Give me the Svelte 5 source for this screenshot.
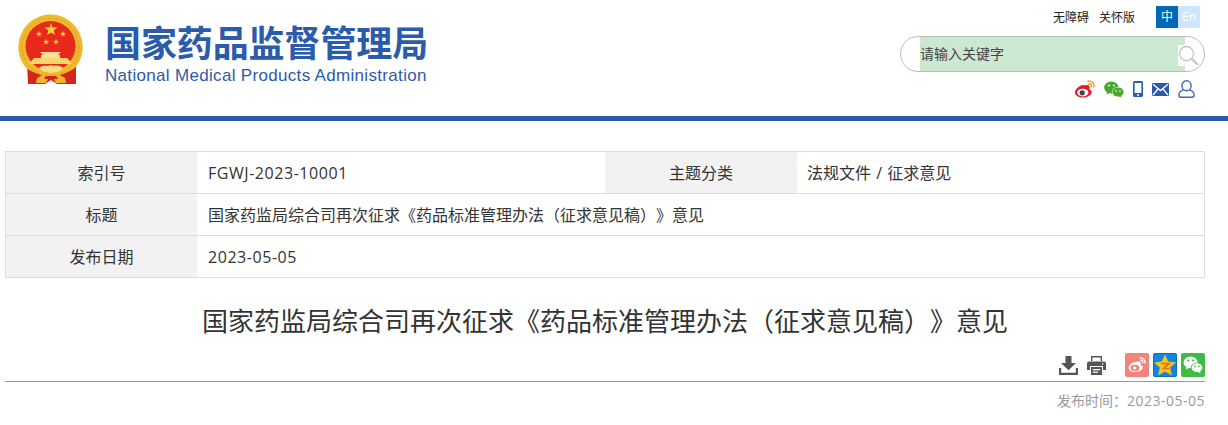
<script>
  const rows = [
    [['索引号', 'FGWJ-2023-10001', true], ['主题分类', '法规文件 / 征求意见', false]],
    [['标题', '国家药监局综合司再次征求《药品标准管理办法（征求意见稿）》意见', false]],
    [['发布日期', '2023-05-05', true]]
  ];
  const title = '国家药监局综合司再次征求《药品标准管理办法（征求意见稿）》意见';
</script>

<div class="page">
  <header class="header">
    <div class="brand">
      <svg class="emblem" width="68" height="72" viewBox="0 0 68 72">
        <path d="M10 49 H59 V70 H40 L34 66 L28 70 H11 Z" fill="#d6261c"/>
        <path d="M33.5 .5 A32.5 32.5 0 0 1 58 54 C52 58 46 60 40 62 H27 C21 60 15 58 9 54 A32.5 32.5 0 0 1 33.5 .5 Z" fill="#f0b92d"/>
        <circle cx="33.5" cy="33" r="28.5" fill="none" stroke="#d9981c" stroke-width="1" stroke-dasharray="2 2"/>
        <circle cx="33.5" cy="32" r="25" fill="#e8291c"/>
        <polygon points="34,9 35.6,13.5 40.4,13.6 36.6,16.5 38,21.1 34,18.4 30,21.1 31.4,16.5 27.6,13.6 32.4,13.5" fill="#f8d23c"/>
        <polygon points="22,17 22.8,19 25,19 23.2,20.4 23.9,22.6 22,21.3 20.1,22.6 20.8,20.4 19,19 21.2,19" fill="#f8d23c"/>
        <polygon points="46,17 46.8,19 49,19 47.2,20.4 47.9,22.6 46,21.3 44.1,22.6 44.8,20.4 43,19 45.2,19" fill="#f8d23c"/>
        <polygon points="29,25 29.8,27 32,27 30.2,28.4 30.9,30.6 29,29.3 27.1,30.6 27.8,28.4 26,27 28.2,27" fill="#f8d23c"/>
        <polygon points="39,25 39.8,27 42,27 40.2,28.4 40.9,30.6 39,29.3 37.1,30.6 37.8,28.4 36,27 38.2,27" fill="#f8d23c"/>
        <path d="M24 44 V41 H26 L23 38 H44 L41 41 H43 V44 Z" fill="#fbdf92"/>
        <path d="M12 50 L17 44 H50 L56 50 Z" fill="#f8d66c"/>
        <path d="M22 54 C26 50 30 53 34 51 C38 53 42 50 46 54 C44 58 39 58 34 59 C29 58 24 58 22 54 Z" fill="#f9dd7a"/>
        <path d="M31 58 L20 64 L19 69 H29 L31 65 L27 65 Z M37 58 L48 64 L49 69 H39 L37 65 L41 65 Z" fill="#efb72c"/>
      </svg>
      <div class="names">
        <div class="cn">国家药品监督管理局</div>
        <div class="en">National Medical Products Administration</div>
      </div>
    </div>
    <div class="tools">
      <div class="toplinks">
        <span>无障碍</span>
        <span>关怀版</span>
        <div class="lang"><b class="zh">中</b><b class="el">En</b></div>
      </div>
      <div class="search">
        <div class="field">请输入关键字</div>
        <svg class="glass" width="21" height="21" viewBox="0 0 21 21" fill="none" stroke="#c4c4c4">
          <circle cx="8.5" cy="8.5" r="7" stroke-width="1.3"/>
          <path d="M13.5 13.5 L20 20" stroke-width="1.8"/>
        </svg>
      </div>
      <div class="social">
        <svg width="20" height="18" viewBox="0 0 20 18">
          <path d="M7.8 5 C3.8 5.8 0 9.6 0 12.6 C0 16 4.5 17.8 8.2 17.6 C12.8 17.3 16.8 15 16.8 12 C16.8 10.2 14.8 9.7 14.4 9.2 C15.2 7 14.2 5 11.8 5 C10.6 5 9 5.7 7.8 5 Z" fill="#e6162d"/>
          <ellipse cx="7.8" cy="12.6" rx="5.6" ry="3.9" fill="#fff"/>
          <circle cx="7.2" cy="12.8" r="2.6" fill="#444"/>
          <path d="M13 1.2 C16.5 .5 19.4 3.3 18.8 6.8 M13.6 4 C15.3 3.6 16.7 5 16.2 6.7" fill="none" stroke="#f5a623" stroke-width="1.6" stroke-linecap="round"/>
        </svg>
        <svg width="20" height="17" viewBox="0 0 20 17">
          <ellipse cx="7.3" cy="6.4" rx="7.2" ry="6" fill="#4ba82e"/>
          <path d="M3 10 L2.6 13.5 L6.5 11.5 Z" fill="#4ba82e"/>
          <ellipse cx="14" cy="11" rx="6" ry="5" fill="#fff"/>
          <ellipse cx="14" cy="11" rx="5.6" ry="4.6" fill="#4ba82e"/>
          <path d="M16.5 14 L17.8 16.6 L14 15 Z" fill="#4ba82e"/>
          <circle cx="5" cy="4.5" r="1" fill="#fff"/><circle cx="9.8" cy="4.5" r="1" fill="#fff"/>
          <circle cx="12" cy="10" r=".8" fill="#fff"/><circle cx="16" cy="10" r=".8" fill="#fff"/>
        </svg>
        <svg width="10" height="16" viewBox="0 0 10 16">
          <rect x="0" y="0" width="10" height="16" rx="1.5" fill="#2c5bab"/>
          <rect x="1.6" y="2" width="6.8" height="10" fill="#fff"/>
          <circle cx="5" cy="14" r="1" fill="#fff"/>
        </svg>
        <svg width="17" height="13" viewBox="0 0 17 13">
          <rect width="17" height="13" rx="1" fill="#2c5bab"/>
          <path d="M1 1.2 L8.5 7.6 L16 1.2 M1 12 L6 6 M16 12 L11 6" fill="none" stroke="#fff" stroke-width="1.3"/>
        </svg>
        <svg width="17" height="18" viewBox="0 0 17 18" fill="none" stroke="#3f66b0" stroke-width="1.4">
          <ellipse cx="8.5" cy="5.8" rx="4.6" ry="5"/>
          <path d="M5.5 9.8 C2.5 10.8 .9 12.8 .9 15 C.9 16.6 2 17.2 3.2 17.2 H13.8 C15 17.2 16.1 16.6 16.1 15 C16.1 12.8 14.5 10.8 11.5 9.8"/>
        </svg>
      </div>
    </div>
  </header>

  <main class="main">
    <div class="info">
      {#each rows as row}
        <div class="row">
          {#each row as [label, value, latin]}
            <div class="label">{label}</div>
            <div class="value" class:latin>{value}</div>
          {/each}
        </div>
      {/each}
    </div>

    <h1>{title}</h1>

    <div class="actions">
      <div class="tools-icons">
        <svg width="19" height="19" viewBox="0 0 19 19" fill="#555">
          <path d="M6.5 0 H12.5 V7 H17 L9.5 14.2 L2 7 H6.5 Z"/>
          <path d="M0 12 H2.2 V16.7 H16.8 V12 H19 V19 H0 Z"/>
        </svg>
        <svg width="19" height="19" viewBox="0 0 19 19">
          <path d="M4 0 H15 V5 H13.6 V1.5 H5.4 V5 H4 Z" fill="#555"/>
          <path d="M2 5.5 H17 Q19 5.5 19 7.5 V14 H16 V10 H3 V14 H0 V7.5 Q0 5.5 2 5.5 Z" fill="#555"/>
          <path d="M4 11 H15 V19 H4 Z M5.8 13 V14.2 H13.2 V13 Z M5.8 15.6 V16.8 H11 V15.6 Z" fill="#555" fill-rule="evenodd"/>
          <circle cx="15.8" cy="8" r=".8" fill="#fff"/>
        </svg>
      </div>
      <div class="share">
        <svg width="24" height="24" viewBox="0 0 24 24">
          <rect width="24" height="24" rx="2" fill="#f3847a"/>
          <path d="M10 9 C6.5 9.6 3.5 12.5 3.6 15 C3.8 18 7.5 19.2 10.6 19 C14.4 18.7 17.8 16.7 17.8 14.3 C17.8 12.6 16 12.3 15.6 11.9 C16.3 10.2 15.6 8.6 13.6 8.6 C12.6 8.6 11.2 8.8 10 9 Z" fill="#fff"/>
          <ellipse cx="10" cy="15" rx="4.4" ry="3.2" fill="#f3847a"/>
          <circle cx="9.7" cy="15.1" r="1.7" fill="#fff"/>
          <path d="M15 5 C18 4.5 20.5 7 20 10 M15.5 7.2 C17 6.9 18.2 8.1 17.8 9.6" fill="none" stroke="#fff" stroke-width="1.3" stroke-linecap="round"/>
        </svg>
        <svg width="24" height="24" viewBox="0 0 24 24">
          <rect width="24" height="24" rx="2" fill="#1287e0"/>
          <rect x=".5" y=".5" width="23" height="23" rx="2" fill="none" stroke="#0a6fc0"/>
          <polygon points="12,1.5 15.2,8.6 23,9.4 17.2,14.6 18.9,22.4 12,18.4 5.1,22.4 6.8,14.6 1,9.4 8.8,8.6" fill="#fcc419"/>
          <path d="M8 10.5 H16 L10.5 15.5 H16.5" fill="none" stroke="#e8711c" stroke-width="1.7"/>
        </svg>
        <svg width="24" height="24" viewBox="0 0 24 24">
          <rect width="24" height="24" rx="2" fill="#3fbc43"/>
          <ellipse cx="9.6" cy="9.4" rx="7" ry="5.8" fill="#fff"/>
          <path d="M5.5 13 L5 16.4 L8.6 14.5 Z" fill="#fff"/>
          <ellipse cx="16" cy="14.6" rx="6.3" ry="5.2" fill="#3fbc43"/>
          <ellipse cx="16" cy="14.6" rx="5.4" ry="4.4" fill="#fff"/>
          <path d="M18.4 17.8 L19.8 20.6 L15.8 18.6 Z" fill="#fff"/>
          <circle cx="7.2" cy="7.6" r="1" fill="#3fbc43"/><circle cx="12" cy="7.6" r="1" fill="#3fbc43"/>
          <circle cx="14" cy="13.4" r=".8" fill="#3fbc43"/><circle cx="18" cy="13.4" r=".8" fill="#3fbc43"/>
        </svg>
      </div>
    </div>

    <div class="date">发布时间：<span class="stamp">2023-05-05</span></div>
  </main>
</div>

<style>
  :global(body) {
    margin: 0;
    background: #fff;
    overflow: hidden;
  }
  .page {
    width: 1228px;
    font-family: "Open Sans", "Noto Sans CJK SC", sans-serif;
    color: #333;
    text-spacing-trim: space-all;
  }
  .header {
    height: 116px;
    border-bottom: 5px solid #2b5bab;
    display: flex;
    justify-content: space-between;
    padding: 0 28px 0 17px;
  }
  .brand {
    display: flex;
    align-items: flex-start;
  }
  .emblem {
    margin-top: 14px;
  }
  .names {
    margin: 19px 0 0 20px;
  }
  .cn {
    font: 700 36px/44px "Noto Sans CJK SC", sans-serif;
    color: #2b5bab;
    letter-spacing: -0.1px;
    white-space: nowrap;
  }
  .en {
    font: 17px/22px "Liberation Sans", sans-serif;
    color: #2b5bab;
    margin-top: 2px;
    letter-spacing: 0.32px;
    white-space: nowrap;
  }
  .tools {
    width: 305px;
    padding-top: 6px;
    margin-right: -5px;
  }
  .toplinks {
    display: flex;
    justify-content: flex-end;
    align-items: center;
    gap: 10px;
    height: 22px;
    padding-right: 5px;
    font-size: 12px;
    color: #222;
    white-space: nowrap;
  }
  .lang {
    display: flex;
    margin-left: 11px;
    line-height: 22px;
    text-align: center;
    font-size: 12px;
  }
  .lang b {
    width: 22px;
    font-weight: 400;
    color: #fff;
  }
  .zh {
    background: #0068b7;
  }
  .el {
    background: #cce6ff;
  }
  .search {
    position: relative;
    box-sizing: border-box;
    height: 36px;
    margin-top: 8px;
    border: 1px solid #bbb;
    border-radius: 18px;
    padding-left: 19px;
  }
  .field {
    width: 265px;
    height: 34px;
    background: #cde8d0;
    font-size: 14px;
    line-height: 34px;
    color: #444;
  }
  .glass {
    position: absolute;
    left: 277px;
    top: 8px;
    background: linear-gradient(to right, #fff 7px, transparent 7px);
  }
  .social {
    display: flex;
    align-items: center;
    justify-content: flex-end;
    gap: 9px;
    height: 18px;
    margin-top: 8px;
    padding-right: 10px;
  }
  .main {
    padding: 30px 23px 0 5px;
  }
  .info {
    border: 1px solid #ddd;
    width: 1200px;
    box-sizing: border-box;
  }
  .row {
    display: flex;
    height: 41px;
    font-size: 16px;
    line-height: 43px;
    color: #333;
    word-spacing: 1px;
  }
  .row + .row {
    border-top: 1px solid #ddd;
  }
  .label {
    flex: none;
    width: 191px;
    background: #f2f2f2;
    text-align: center;
  }
  .label:nth-child(3) {
    width: 192px;
  }
  .value {
    flex: 1 1 0;
    padding-left: 11px;
    white-space: nowrap;
  }
  .value:nth-child(4) {
    flex: 0 0 397px;
    padding-left: 10px;
  }
  .latin {
    letter-spacing: 0.55px;
  }
  h1 {
    margin: 24px 0 0;
    width: 1200px;
    text-align: center;
    font-size: 26px;
    font-weight: 400;
    line-height: 38px;
    color: #333;
  }
  .actions {
    width: 1200px;
    box-sizing: border-box;
    display: flex;
    justify-content: flex-end;
    align-items: flex-end;
    height: 42px;
    border-bottom: 1px solid #999;
    padding-bottom: 4px;
  }
  .tools-icons {
    display: flex;
    align-items: center;
    gap: 9px;
    height: 24px;
  }
  .share {
    display: flex;
    gap: 4px;
    margin-left: 19px;
  }
  .date {
    width: 1200px;
    text-align: right;
    font-size: 14px;
    line-height: 20px;
    margin-top: 9px;
    color: #999;
  }
  .stamp {
    letter-spacing: 0.5px;
  }
</style>
